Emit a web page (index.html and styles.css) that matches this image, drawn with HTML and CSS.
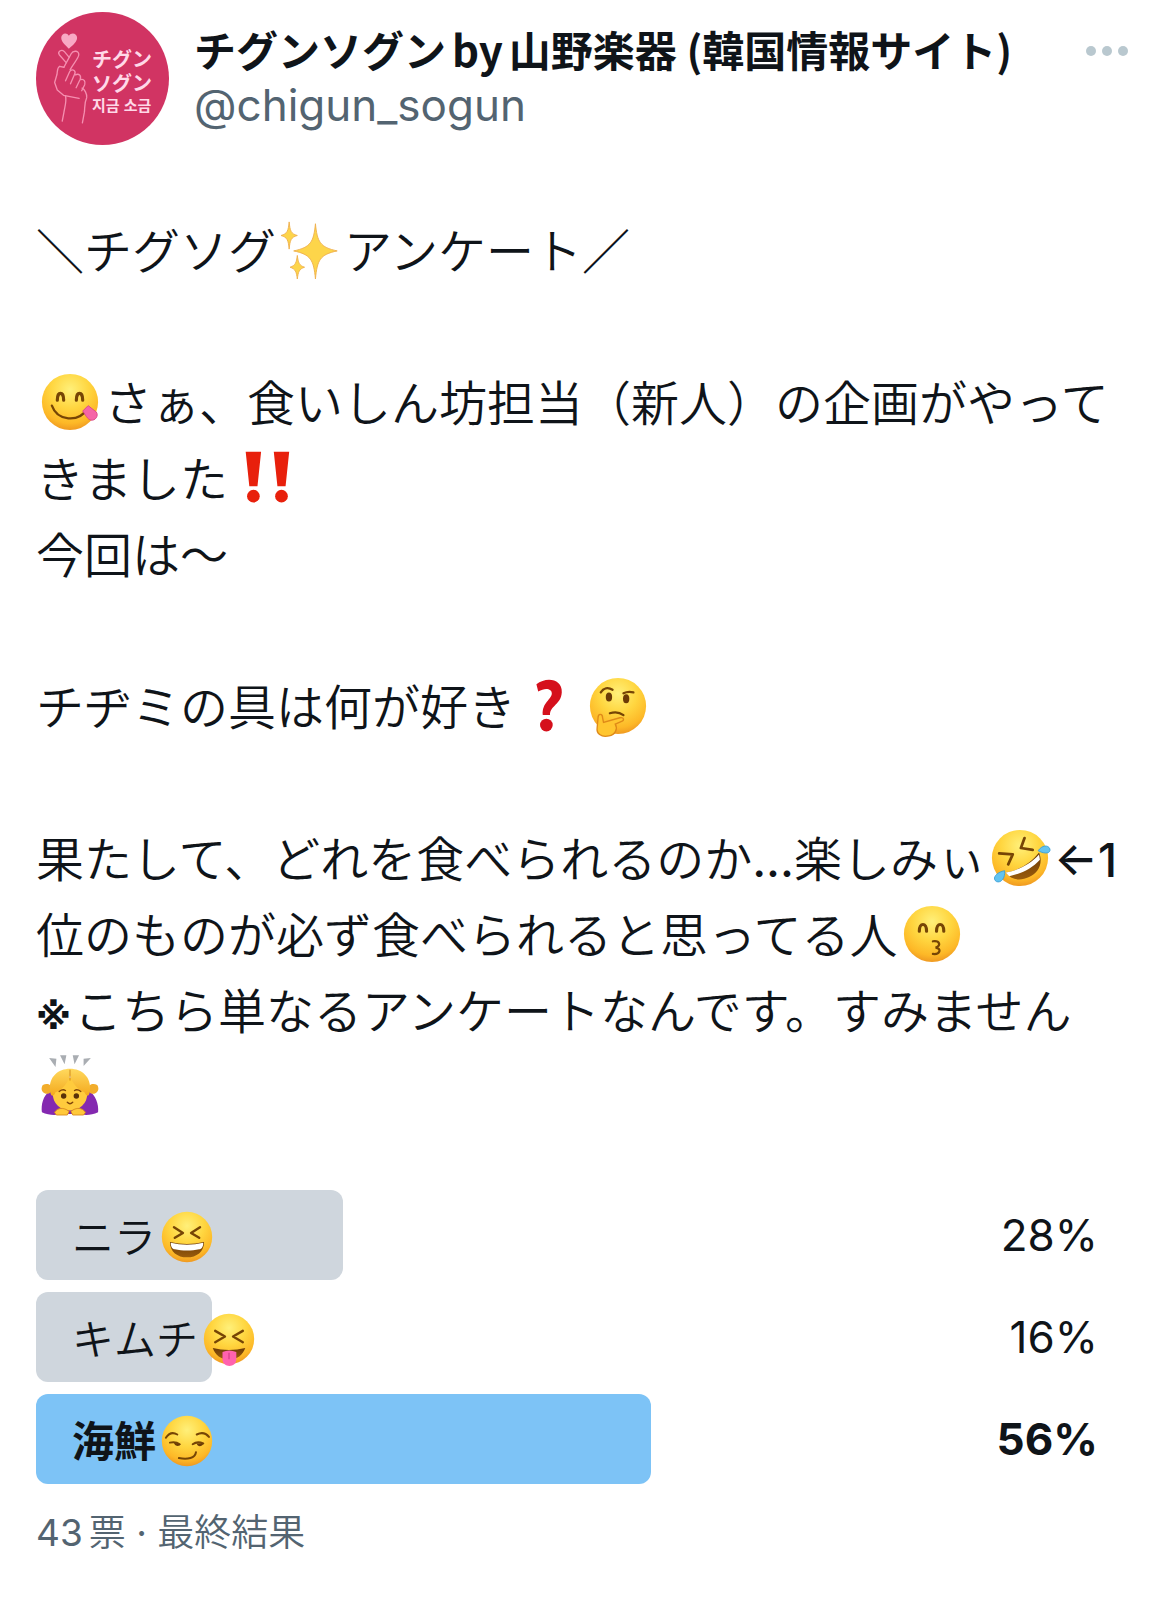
FILE: index.html
```
<!DOCTYPE html>
<html lang="ja">

<head>
    <meta charset="utf-8">
    <meta name="viewport" content="width=device-width, initial-scale=1">
    <title>チグンソグンby山野楽器</title>
    <link rel="stylesheet" href="styles.css">
</head>

<body>
    <!-- Shared emoji gradients -->
    <svg class="defs" width="0" height="0" aria-hidden="true">
        <defs>
            <radialGradient id="face" cx="50%" cy="28%" r="75%">
                <stop offset="0" stop-color="#fff07a" />
                <stop offset="0.45" stop-color="#ffd640" />
                <stop offset="0.8" stop-color="#fdb827" />
                <stop offset="1" stop-color="#ec9220" />
            </radialGradient>
            <linearGradient id="mouth" x1="0" y1="0" x2="0" y2="1">
                <stop offset="0" stop-color="#6b3a06" />
                <stop offset="1" stop-color="#9a5c0c" />
            </linearGradient>
            <linearGradient id="hair" x1="0" y1="0" x2="0" y2="1">
                <stop offset="0" stop-color="#ffd95e" />
                <stop offset="1" stop-color="#f4a91d" />
            </linearGradient>
        </defs>
    </svg>

    <article class="tweet">
        <header class="tweet-header">
            <div class="avatar">
                <svg class="avatar-hand" viewBox="50 60 115 290" aria-hidden="true">
                    <path d="M104 115C92 103 81 94 81 82c0-14 17-18 23-6 7-12 25-8 25 6 0 12-12 22-25 33z" fill="#f8a9c4" />
                    <g fill="none" stroke="#f58fb0" stroke-width="4" stroke-linecap="round" stroke-linejoin="round">
                        <path d="M89 171l14-26 8-15c6-11 25-10 23 4-1 9-14 24-26 44" />
                        <path d="M96 157L75 133c-6-9 6-17 15-10l15 18" />
                        <path d="M89 171L76 168c-8 5-6 14-8 25l-7 24 8 23 19 16 47 9" />
                        <path d="M94 212l13-29c10-9 20 0 14 10l-12 28M124 194c10-5 19 2 14 14l-12 25M141 208c9-2 14 6 11 16l-9 18" />
                        <path d="M144 234c8 4 15 17 14 29-8 17-5 30-7 44l-6 32M94 258c4 16-3 36-5 50l-5 26" />
                    </g>
                </svg>
                <div class="avatar-text">
                    <span>チグン</span>
                    <span>ソグン</span>
                    <span class="korean" lang="ko">지금 소금</span>
                </div>
            </div>
            <div class="account">
                <h1 class="name">チグンソグン<span class="latin">by</span>山野楽器 (韓国情報サイト)</h1>
                <a class="handle" href="#">@chigun_sogun</a>
            </div>
            <button class="more" type="button" aria-label="もっと見る">
                <span class="dot"></span>
                <span class="dot"></span>
                <span class="dot"></span>
            </button>
        </header>

        <div class="tweet-text">
            <p>＼チグソグ<svg class="emoji" viewBox="0 0 64 64" role="img" aria-label="きらきら">
                    <g fill="#fdd54a" stroke="#eeb04d" stroke-width="1">
                        <path d="M38 3c2 20 5 26 24 30-19 4-22 10-24 31-2-21-5-27-24-31 19-4 22-10 24-30z" />
                        <path d="M9 1c1 10 2 13 9 15-7 2-8 5-9 15-1-10-2-13-9-15 7-2 8-5 9-15z" />
                        <path d="M18 38c1 8 2 11 8 13-6 2-7 5-8 13-1-8-2-11-8-13 6-2 7-5 8-13z" />
                    </g>
                </svg>アンケート／</p>
            <p class="blank"></p>
            <p><svg class="emoji" viewBox="0 0 64 64" role="img" aria-label="おいしい顔">
                    <circle cx="32" cy="32" r="31" fill="url(#face)" />
                    <g fill="none" stroke="#764505" stroke-linecap="round">
                        <path d="M18 30c0-10 7-10 7 0M39 30c0-10 7-10 7 0" stroke-width="3.5" />
                        <path d="M12 36c6 17 29 19 39 4" stroke-width="2.5" />
                    </g>
                    <path d="M46 42l6-6 9 7c3 4-1 10-6 9-4-1-6-6-9-10z" fill="#f565a8" stroke="#d84488" />
                </svg>さぁ、食いしん坊担当（新人）の企画がやって</p>
            <p>きました<svg class="emoji" viewBox="0 0 64 64" role="img" aria-label="!!">
                    <g fill="#e8200c">
                        <path d="M14 3h17l-4 38h-9zM45 3h17l-4 38h-9z" />
                        <circle cx="22.500" cy="52" r="7" />
                        <circle cx="53.500" cy="52" r="7" />
                    </g>
                </svg></p>
            <p>今回は〜</p>
            <p class="blank"></p>
            <p>チヂミの具は何が好き<svg class="emoji" viewBox="0 0 64 64" role="img" aria-label="?">
                    <path d="M17 8c11-9 29-6 28 9-1 14-13 14-13 25h-8c-1-14 10-17 10-24 0-5-7-7-15-2z" fill="#d5101c" />
                    <circle cx="28" cy="53" r="7" fill="#d5101c" />
                </svg><svg class="emoji" viewBox="0 0 64 64" role="img" aria-label="考える顔">
                    <circle cx="32" cy="32" r="31" fill="url(#face)" />
                    <g fill="none" stroke="#764505" stroke-width="2.500" stroke-linecap="round">
                        <path d="M13 17c3-5 8-6 13-3M38 18c4-2 7-2 11-1M23 40c6-2 11-1 15 2" />
                    </g>
                    <ellipse cx="22" cy="22" rx="3.500" ry="5" fill="#6b3a06" />
                    <ellipse cx="41" cy="24" rx="3.500" ry="5" fill="#6b3a06" />
                    <path d="M10 45c0-5 5-5 5 0l1 5 18-5c5-1 5 3 2 4l-7 3c3 5 0 12-7 13-9 2-14-3-13-9z" fill="#ffc62f" stroke="#df8a18" stroke-width="1.500" />
                </svg></p>
            <p class="blank"></p>
            <p>果たして、どれを食べられるのか<span class="latin-run">...</span>楽しみぃ<svg class="emoji" viewBox="0 0 64 64" role="img" aria-label="笑い転げる顔">
                    <circle cx="32" cy="32" r="31" fill="url(#face)" />
                    <path d="M9 27l15 1-5 11M37 10l-4 11 13 2" fill="none" stroke="#764505" stroke-width="3" stroke-linecap="round" stroke-linejoin="round" />
                    <path d="M16 48c14-2 28-10 37-22 5 12-1 23-11 27-10 5-20 3-26-5z" fill="url(#mouth)" />
                    <path d="M16 48c14-2 28-10 37-20l1 6c-9 10-20 15-34 18z" fill="#fff" />
                    <path d="M52 24c4-6 11-7 13-2 1 5-5 6-13 2zM15 46c1 8-4 14-9 12-5-3-1-10 9-12z" fill="#63c3ef" stroke="#3b9fd8" />
                </svg><span class="latin-run">←1</span></p>
            <p>位のものが必ず食べられると思ってる人<svg class="emoji" viewBox="0 0 64 64" role="img" aria-label="キス顔">
                    <circle cx="32" cy="32" r="31" fill="url(#face)" />
                    <g fill="none" stroke="#764505" stroke-linecap="round">
                        <path d="M18 29c0-10 8-10 8 0M37 29c0-10 8-10 8 0" stroke-width="3.500" />
                        <path d="M33 40c8-1 9 5 3 7 7 1 5 8-3 7" stroke-width="2.500" />
                    </g>
                </svg></p>
            <p><span class="note-mark">※</span>こちら単なるアンケートなんです。すみません</p>
            <p><svg class="emoji" viewBox="0 0 64 64" role="img" aria-label="おじぎする女性">
                    <path d="M9 3l8 1-1 9zM21 0h7l-2 10zM35 0h7l-5 10zM47 4l8-1-8 9z" fill="#a9adb2" transform="translate(0 -2)" />
                    <path d="M10 37C2 43 0 53 1 61c8 4 17 3 23 2h16c7 1 15 2 23-2 1-9-3-19-10-24z" fill="#8429b0" />
                    <path d="M2 31c5-3 10 0 10 4s-4 7-8 5c-4-2-4-6-2-9zM62 31c-5-3-10 0-10 4s4 7 8 5c4-2 4-6 2-9z" fill="#f2ad2b" />
                    <ellipse cx="32" cy="41" rx="19" ry="18" fill="#ffcb3d" />
                    <path d="M10 38C8 22 19 13 32 13s24 9 22 25c-1 6-4 6-6 1-7-3-13-9-16-19-3 10-9 16-16 19-2 5-5 5-6-1z" fill="url(#hair)" />
                    <path d="M32 14v12" stroke="#ce8417" stroke-width="1" />
                    <circle cx="25" cy="43" r="3" fill="#5a3109" />
                    <circle cx="39" cy="43" r="3" fill="#5a3109" />
                    <path d="M20 38q4-3 7-1M37 37q3-2 7 1M29 50q3 3 6 0" fill="none" stroke="#80460b" stroke-width="1.500" stroke-linecap="round" />
                    <path d="M15 61c3-5 10-6 16-1l-2 4H17zM49 61c-3-5-10-6-16-1l2 4h12z" fill="#ffc83a" stroke="#db8d1b" />
                </svg></p>
        </div>

        <ul class="poll">
            <li class="option">
                <div class="bar" style="width: 28%"></div>
                <span class="label">ニラ<svg class="emoji" viewBox="0 0 64 64" role="img" aria-label="大笑い">
                        <circle cx="32" cy="32" r="31" fill="url(#face)" />
                        <path d="M16 20l11 7-10 6M48 20l-11 7 10 6" fill="none" stroke="#764505" stroke-width="3" stroke-linecap="round" stroke-linejoin="round" />
                        <path d="M11 38q21 5 42 0c0 12-9 19-21 19s-21-7-21-19z" fill="url(#mouth)" />
                        <path d="M12 39q20 5 40 0c0 5-2 8-5 8-9 2-21 2-30 0-3 0-5-3-5-8z" fill="#fff" />
                    </svg></span>
                <span class="percent">28%</span>
            </li>
            <li class="option">
                <div class="bar" style="width: 16%"></div>
                <span class="label">キムチ<svg class="emoji" viewBox="0 0 64 64" role="img" aria-label="舌を出した顔">
                        <circle cx="32" cy="32" r="31" fill="url(#face)" />
                        <path d="M15 22l12 7-12 7M49 22l-12 7 12 7" fill="none" stroke="#764505" stroke-width="3" stroke-linecap="round" stroke-linejoin="round" />
                        <path d="M12 43q20 5 40 0c-3 9-10 14-20 14s-17-5-20-14z" fill="url(#mouth)" />
                        <path d="M24 48q8-4 17 0v9c0 11-17 11-17 0z" fill="#ff62ae" />
                        <path d="M32 49v8" stroke="#d63e87" stroke-width="1.500" />
                    </svg></span>
                <span class="percent">16%</span>
            </li>
            <li class="option winner">
                <div class="bar" style="width: 56%"></div>
                <span class="label">海鮮<svg class="emoji" viewBox="0 0 64 64" role="img" aria-label="にやり顔">
                        <circle cx="32" cy="32" r="31" fill="url(#face)" />
                        <g fill="none" stroke="#764505" stroke-width="2.500" stroke-linecap="round">
                            <path d="M6 28c4-6 9-7 14-4M44 24c6-3 11-2 15 3M11 34c4-1 8-1 12 2M39 36c4-3 8-3 13-1M22 53c11 2 20 0 21-7" />
                        </g>
                        <path d="M16 34c1 5 7 5 8 2M44 35c1 5 7 4 8 0" fill="#6b3a06" />
                    </svg></span>
                <span class="percent">56%</span>
            </li>
        </ul>
        <footer class="votes"><span class="count">43</span>票<span class="separator"> · </span>最終結果</footer>
    </article>
</body>

</html>
```

FILE: styles.css
```
* {
    box-sizing: border-box;
}

body {
    margin: 0;
    background-color: #fff;
    color: #0f1419;
    font-family: Inter, "Noto Sans CJK JP", sans-serif;
}

.defs {
    position: absolute;
}

.tweet {
    padding: 12px 36px 48px;
}

.tweet-header {
    display: flex;
    align-items: flex-start;
    margin-bottom: 65px;
}

/* Avatar */
.avatar {
    display: flex;
    flex: none;
    gap: 3px;
    width: 133px;
    height: 133px;
    padding: 18px 0 0 15px;
    border-radius: 50%;
    background-color: #d13463;
    color: #ffd9e8;
}

.avatar-hand {
    width: 38px;
    height: 97px;
}

.avatar-text {
    display: flex;
    flex-direction: column;
    padding-top: 17px;
    font-family: "Noto Sans CJK JP", sans-serif;
    font-size: 20px;
    font-weight: 700;
    line-height: 24px;
    white-space: nowrap;
}

.avatar-text .korean {
    font-family: "Noto Sans CJK KR", sans-serif;
    font-size: 15px;
    line-height: 20px;
}

/* Account */
.account {
    flex: 1;
    padding: 10px 0 0 25px;
}

.name {
    margin: 0 0 2px;
    font-family: "Noto Sans CJK JP", sans-serif;
    font-size: 42px;
    font-weight: 700;
    line-height: 54px;
    white-space: nowrap;
}

.name .latin {
    margin: 0 6px;
}

.handle {
    display: block;
    color: #536471;
    font-size: 44px;
    line-height: 54px;
    text-decoration: none;
}

.more {
    display: flex;
    gap: 6px;
    margin-top: 34px;
    padding: 0 6px;
    border: none;
    background: none;
    cursor: pointer;
}

.dot {
    width: 10px;
    height: 10px;
    border-radius: 50%;
    background-color: #b9c8cf;
}

/* Text */
.tweet-text {
    font-family: "Noto Sans CJK JP", sans-serif;
    font-size: 48px;
    font-weight: 350;
    line-height: 76px;
    white-space: nowrap;
}

.tweet-text p {
    height: 76px;
    margin: 0;
}

.emoji {
    width: 58px;
    height: 58px;
    margin: 0 5px;
    overflow: visible;
    vertical-align: -10px;
}

.latin-run {
    font-family: Inter, sans-serif;
    font-size: 46px;
    font-weight: 500;
}

.note-mark {
    display: inline-block;
    width: 38px;
    font-family: "DejaVu Sans", sans-serif;
    font-size: 36px;
    font-weight: 700;
    line-height: 48px;
}

/* Poll */
.poll {
    display: flex;
    flex-direction: column;
    gap: 12px;
    margin: 68px 0 0;
    padding: 0;
    list-style: none;
}

.option {
    position: relative;
    display: flex;
    align-items: center;
    justify-content: space-between;
    height: 90px;
    padding: 0 36px;
    font-size: 42px;
}

/* The bar lies under the label */
.bar {
    position: absolute;
    top: 0;
    left: 0;
    height: 100%;
    border-radius: 12px;
    background-color: #cfd6dd;
}

.label {
    position: relative;
    font-family: "Noto Sans CJK JP", sans-serif;
    font-weight: 350;
    line-height: 90px;
}

.label .emoji {
    width: 52px;
    height: 52px;
}

.percent {
    position: relative;
    font-size: 44px;
}

.winner .bar {
    background-color: #7dc3f6;
}

.winner .label {
    font-weight: 700;
}

.winner .percent {
    font-weight: 700;
}

.votes {
    margin-top: 18px;
    color: #536471;
    font-family: "Noto Sans CJK JP", sans-serif;
    font-size: 37px;
    font-weight: 350;
    line-height: 56px;
}

.count,
.separator {
    font-family: Inter, sans-serif;
    font-weight: 400;
}

.count {
    margin-right: 6px;
}
```
